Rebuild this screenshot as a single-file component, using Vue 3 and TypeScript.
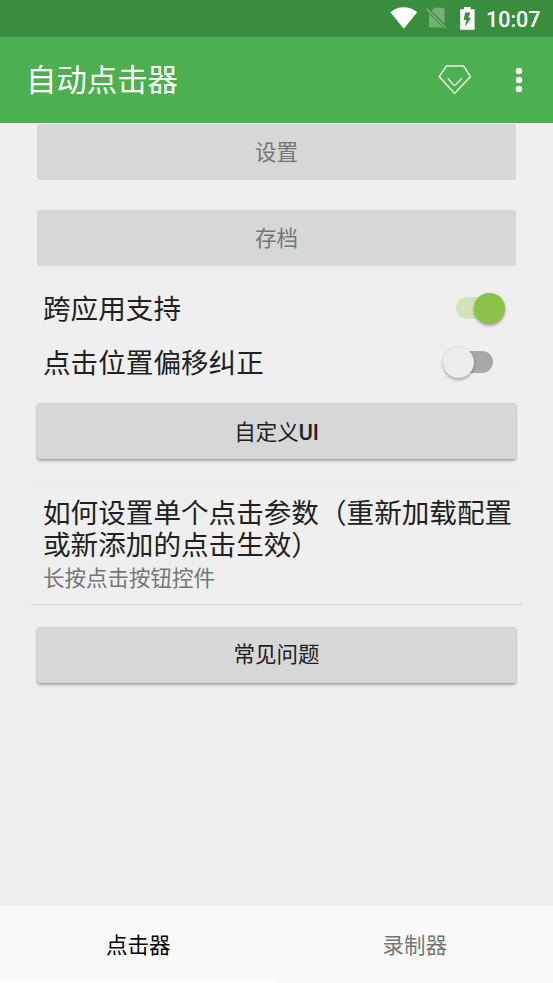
<script setup lang="ts">
import { ref } from 'vue'

interface SwitchRow {
  label: string
  on: boolean
}

const rows = ref<SwitchRow[]>([
  { label: '跨应用支持', on: true },
  { label: '点击位置偏移纠正', on: false },
])
const tabs: string[] = ['点击器', '录制器']
const activeTab = ref(0)
</script>

<template>
  <div class="screen">
    <div class="status-bar">
      <svg class="wifi" width="28" height="22" viewBox="0 0 28 22">
        <path d="M0.4 5.2C4.2 2 8.8 0.3 13.8 0.3S23.4 2 27.2 5.2L13.8 21.7Z" fill="#fff" />
      </svg>
      <svg class="sim" width="22" height="22" viewBox="0 0 22 22">
        <path d="M9 0.8H17.5q2 0 2 2v14L6.7 3.9ZM4 6.8 17.7 20.6H6q-2 0-2-2Z" fill="#75b078" />
        <path d="M1.6 1.8 20.6 20.9" fill="none" stroke="#75b078" stroke-width="1.9" />
      </svg>
      <svg class="battery" width="15" height="23" viewBox="0 0 15 23">
        <path d="M4 0h6.5v2.2H14.6V22.7H0.2V2.2H4Z" fill="#fff" />
        <path d="M10.5 5.6H5.2L3.6 13H6.5L4.8 19.7L11.2 10.7H8.2Z" fill="#388e3c" />
      </svg>
      <span class="clock">10:07</span>
    </div>

    <header class="app-bar">
      <h1>自动点击器</h1>
      <svg class="gem" width="34" height="30" viewBox="0 0 34 30">
        <path d="M8.4 1H25.6L32.4 11.6L16.6 28.4L1.2 11.6Z" fill="none" stroke="#e6f3e6" stroke-width="1.5" />
        <path d="M9.8 13.2L15 19.3Q16.6 21 18.2 19.3L23.8 13.2" fill="none" stroke="#d9edda" stroke-width="1.5" />
      </svg>
      <svg class="more" width="8" height="26" viewBox="0 0 8 26">
        <circle cx="4" cy="4" r="3.2" fill="#fff" />
        <circle cx="4" cy="13" r="3.2" fill="#fff" />
        <circle cx="4" cy="22" r="3.2" fill="#fff" />
      </svg>
    </header>

    <main class="content">
      <button class="btn disabled" disabled>设置</button>
      <button class="btn disabled archive" disabled>存档</button>

      <div class="switches">
        <div v-for="row in rows" :key="row.label" class="switch-row">
          <span>{{ row.label }}</span>
          <button class="switch" :class="{ on: row.on }" :aria-label="row.label" @click="row.on = !row.on">
            <i class="track"></i>
            <i class="thumb"></i>
          </button>
        </div>
      </div>

      <button class="btn raised custom">自定义<b>UI</b></button>

      <section class="help">
        <p class="question">如何设置单个点击参数（重新加载配置或新添加的点击生效）</p>
        <p class="answer">长按点击按钮控件</p>
      </section>

      <button class="btn raised faq">常见问题</button>
    </main>

    <nav class="tabs">
      <button
        v-for="(tab, index) in tabs"
        :key="tab"
        class="tab"
        :class="{ active: activeTab === index }"
        @click="activeTab = index"
      >
        {{ tab }}
      </button>
    </nav>
  </div>
</template>

<style>
body {
  margin: 0;
}
</style>

<style scoped>
.screen {
  display: flex;
  flex-direction: column;
  height: 983px;
  overflow: hidden;
  background: #efefef;
  color: #212121;
  font-family: Roboto, 'Noto Sans CJK SC', sans-serif;
}

button {
  border: 0;
  padding: 0;
  margin: 0;
  font: inherit;
  color: inherit;
}

.status-bar {
  display: flex;
  flex: none;
  box-sizing: border-box;
  height: 37px;
  padding: 7px 12px 0 389.5px;
  background: #388e3c;
}

.status-bar svg,
.app-bar svg {
  flex: none;
}

.sim {
  margin-left: 7.5px;
}

.battery {
  margin-left: 13px;
}

.clock {
  margin-left: 11px;
  font-size: 21.5px;
  font-weight: 500;
  line-height: 25px;
  color: #fff;
}

.app-bar {
  display: flex;
  align-items: center;
  flex: none;
  box-sizing: border-box;
  height: 86px;
  padding: 0 30px 0 26px;
  background: #4caf50;
}

h1 {
  flex: 1;
  margin: 0;
  padding-top: 2px;
  font-size: 30.4px;
  font-weight: 400;
  line-height: 40px;
  color: #fff;
}

.more {
  margin-left: 43px;
}

.content {
  display: flex;
  flex-direction: column;
  flex: 1;
  padding: 1px 31px 0;
}

.btn {
  flex: none;
  height: 56px;
  margin: 0 6px;
  border-radius: 3px;
  background: #d6d7d7;
  font-size: 21.5px;
  line-height: 58px;
  text-align: center;
}

.btn b {
  font-weight: 500;
}

.disabled {
  color: #757575;
}

.archive {
  margin-top: 30px;
}

.raised {
  box-shadow: 0 2px 3px rgba(0, 0, 0, 0.28), 0 0 2px rgba(0, 0, 0, 0.14);
}

.switches {
  padding: 15px 11px 0 12px;
}

.switch-row {
  display: flex;
  align-items: center;
  justify-content: space-between;
  height: 54px;
  font-size: 27.6px;
}

.switch-row span {
  padding-bottom: 2px;
}

.switch {
  display: flex;
  align-items: center;
  width: 68px;
  height: 40px;
  background: none;
}

.track {
  width: 37px;
  height: 22px;
  margin-left: 13px;
  border-radius: 11px;
  background: #a8a8a8;
}

.thumb {
  width: 31px;
  height: 31px;
  margin-left: -50px;
  border-radius: 50%;
  background: #ececec;
  box-shadow: 0 2px 3px rgba(0, 0, 0, 0.28), 0 0 2px rgba(0, 0, 0, 0.12);
}

.switch.on .track {
  background: #d0e3ba;
}

.switch.on .thumb {
  margin-left: -19px;
  background: #8bc34a;
}

.custom {
  margin-top: 14px;
  line-height: 59px;
}

.help {
  box-sizing: border-box;
  height: 124px;
  margin-top: 22px;
  padding: 16px 0 0 12px;
  border-top: 1px solid #eaeaea;
  border-bottom: 1px solid #d2d2d2;
}

.help p {
  margin: 0;
}

.question {
  font-size: 27.6px;
  line-height: 32px;
}

.answer {
  font-size: 21.5px;
  line-height: 34px;
  color: #757575;
}

.faq {
  margin-top: 22px;
  line-height: 56px;
}

.tabs {
  display: flex;
  flex: none;
  height: 77px;
  background: #fafafa;
}

.tab {
  flex: 1;
  box-sizing: border-box;
  border-bottom: 3px solid transparent;
  background: none;
  font-size: 21.5px;
  color: #757575;
}

.tab.active {
  border-bottom-color: #fff;
  color: #000;
}
</style>
